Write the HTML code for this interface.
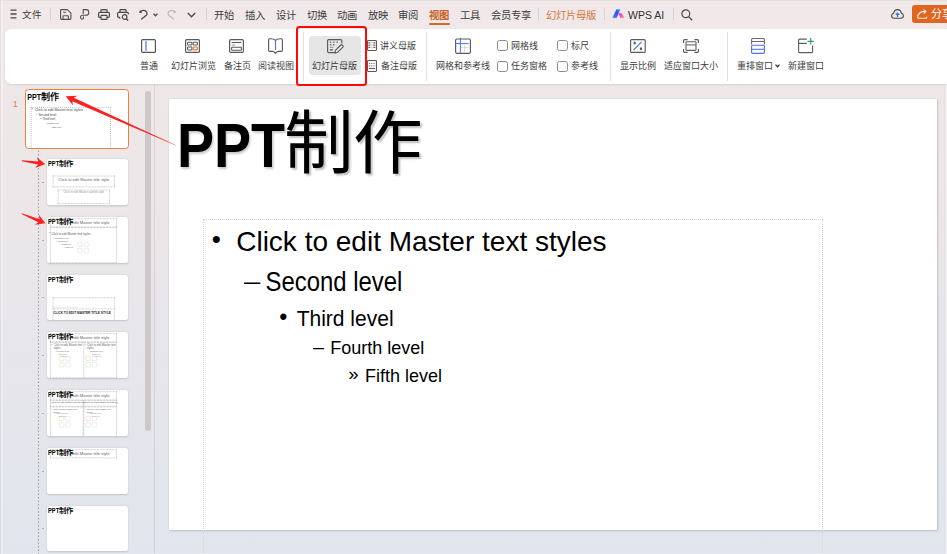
<!DOCTYPE html>
<html lang="zh-CN">
<head>
<meta charset="utf-8">
<style>
*{box-sizing:border-box;margin:0;padding:0}
html,body{width:947px;height:554px;overflow:hidden}
body{position:relative;font-family:"Liberation Sans",sans-serif;color:#333;
 background:linear-gradient(180deg,#f1e9e9 0px,#ede7e8 150px,#e6e6eb 380px,#e1e5ed 554px);}
.a{position:absolute}
.t{position:absolute;white-space:nowrap;line-height:1}
.tab{font-size:10.3px;color:#3c3c3c;top:11px}
.sep{position:absolute;width:1px;background:#d9d2d2}
.lbl{font-size:9px;color:#3c3c3c;top:62px}
svg{position:absolute;overflow:visible}
.thumb{position:absolute;left:46.7px;width:81.1px;height:45.6px;background:#fff;border-radius:2.5px;box-shadow:0 0.5px 2px rgba(0,0,0,.16);overflow:hidden}
.mini{position:absolute;left:0;top:0;width:768.5px;height:432.2px;transform-origin:0 0;transform:scale(.1055)}
</style>
</head>
<body>
<!-- ============ TOP BAR ============ -->
<div class="a" style="left:0;top:0;width:947px;height:1.2px;background:#e6dcdd"></div>
<div class="a" style="left:0;top:0;width:1px;height:554px;background:rgba(120,90,95,.07)"></div><div class="a" style="left:1px;top:0;width:1.5px;height:554px;background:rgba(255,255,255,.3)"></div>
<svg style="left:10px;top:9px" width="8" height="10" viewBox="0 0 8 10"><path d="M0.5 1.2h6M0.5 5h6M0.5 8.8h6" stroke="#4a4a4a" stroke-width="1.3"/></svg>
<div class="t tab" style="left:22px;font-size:9.5px;top:10.4px">文件</div>
<div class="sep" style="left:50px;top:8px;height:12px"></div>
<!-- save -->
<svg style="left:60px;top:9px" width="12" height="11" viewBox="0 0 12 11"><path d="M.6 1.5c0-.5.4-.9.9-.9h5.8l3.6 3.6v5.3c0 .5-.4.9-.9.9H1.5c-.5 0-.9-.4-.9-.9z" fill="none" stroke="#505050" stroke-width="1.1" stroke-linejoin="round"/><path d="M3.3 3.3h2.4" stroke="#505050" stroke-width="1.1"/><path d="M3 10.4V7.4c0-.4.3-.7.7-.7h4c.4 0 .7.3.7.7v3" fill="none" stroke="#505050" stroke-width="1.1"/></svg>
<!-- link -->
<svg style="left:80px;top:9px" width="10" height="11" viewBox="0 0 10 11"><path d="M3.2 5V.6H6c1.6 0 2.8 1.2 2.8 2.8S7.6 6.3 6 6.3H2.6C1.3 6.3.5 7.2.5 8.3s.8 1.9 1.6 1.9c.9 0 1.4-.8 1.4-1.7V7.4" fill="none" stroke="#505050" stroke-width="1.1" stroke-linejoin="round"/></svg>
<!-- print -->
<svg style="left:98px;top:9px" width="12" height="11" viewBox="0 0 12 11"><path d="M3 3.3V1.3c0-.4.3-.7.7-.7h4.6c.4 0 .7.3.7.7v2" fill="none" stroke="#4a4a4a" stroke-width="1.2"/><path d="M2.8 8.3H1.6c-.6 0-1-.4-1-1V4.5c0-.7.5-1.2 1.2-1.2h8.4c.7 0 1.2.5 1.2 1.2v2.8c0 .6-.4 1-1 1H9.2" fill="none" stroke="#4a4a4a" stroke-width="1.2"/><rect x="3" y="6.3" width="6" height="4" rx=".6" fill="none" stroke="#4a4a4a" stroke-width="1.2"/></svg>
<!-- print preview -->
<svg style="left:117px;top:9px" width="13" height="12" viewBox="0 0 13 12"><path d="M3 3.3V1.3c0-.4.3-.7.7-.7h4.6c.4 0 .7.3.7.7v2" fill="none" stroke="#4a4a4a" stroke-width="1.2"/><path d="M2.6 8.3H1.6c-.6 0-1-.4-1-1V4.5c0-.7.5-1.2 1.2-1.2h8.4c.7 0 1.2.5 1.2 1.2v.8" fill="none" stroke="#4a4a4a" stroke-width="1.2"/><path d="M2.2 8.2l1 1.4" stroke="#4a4a4a" stroke-width="1.2"/><circle cx="7.6" cy="8" r="2.3" fill="none" stroke="#4a4a4a" stroke-width="1.2"/><path d="M9.3 9.7l1.8 1.8" stroke="#4a4a4a" stroke-width="1.3"/></svg>
<!-- undo -->
<svg style="left:138px;top:9px" width="10" height="11" viewBox="0 0 10 11"><path d="M2.4 2.9C3.9 1.3 6.4 1 7.9 2.3c1.4 1.2 1.3 3.1.1 4.3L3.6 10" fill="none" stroke="#4a4a4a" stroke-width="1.3" stroke-linecap="round"/><path d="M.9 3.6L2.3.9l1.7 3.3z" fill="#4a4a4a"/></svg>
<svg style="left:152.5px;top:13px" width="5" height="3.5" viewBox="0 0 5 3.5"><path d="M.5.6L2.5 2.7 4.5.6" fill="none" stroke="#4a4a4a" stroke-width="1.3"/></svg>
<!-- redo -->
<svg style="left:167px;top:9px" width="10" height="11" viewBox="0 0 10 11"><path d="M7.6 2.9C6.1 1.3 3.6 1 2.1 2.3.7 3.5.8 5.4 2 6.6L6.4 10" fill="none" stroke="#bcb7b7" stroke-width="1.2" stroke-linecap="round"/><path d="M9.1 3.6L7.7.9 6 4.2z" fill="#bcb7b7"/></svg>
<!-- chevron -->
<svg style="left:187px;top:12px" width="9" height="6" viewBox="0 0 9 6"><path d="M.8 1l3.7 3.8L8.2 1" fill="none" stroke="#4a4a4a" stroke-width="1.3"/></svg>
<div class="sep" style="left:206px;top:8px;height:12px"></div>
<div class="t tab" style="left:214px">开始</div>
<div class="t tab" style="left:245px">插入</div>
<div class="t tab" style="left:276px">设计</div>
<div class="t tab" style="left:307px">切换</div>
<div class="t tab" style="left:337px">动画</div>
<div class="t tab" style="left:368px">放映</div>
<div class="t tab" style="left:398px">审阅</div>
<div class="t tab" style="left:429px;color:#c8622a;font-weight:bold">视图</div>
<div class="a" style="left:429px;top:23px;width:21px;height:2px;background:#d06a30;border-radius:1px"></div>
<div class="t tab" style="left:460px">工具</div>
<div class="t tab" style="left:491px">会员专享</div>
<div class="sep" style="left:538px;top:8px;height:12px"></div>
<div class="t tab" style="left:546px;color:#d4773d">幻灯片母版</div>
<div class="sep" style="left:604px;top:8px;height:12px"></div>
<!-- WPS AI logo -->
<svg style="left:612px;top:9px" width="13" height="10" viewBox="0 0 13 10"><defs><linearGradient id="wg1" x1="0" y1="1" x2="1" y2="0"><stop offset="0" stop-color="#4a7dff"/><stop offset=".6" stop-color="#3050f2"/><stop offset="1" stop-color="#20a8ff"/></linearGradient><linearGradient id="wg2" x1="0" y1="0" x2="1" y2="1"><stop offset="0" stop-color="#f020e8"/><stop offset="1" stop-color="#ff8a8a"/></linearGradient></defs><path d="M.7 8.7h3.8L8.1.6H4.5z" fill="url(#wg1)" stroke="url(#wg1)" stroke-width=".4" stroke-linejoin="round"/><path d="M6.8 4.6h2.7l2.6 4.1H8.4z" fill="url(#wg2)" stroke="url(#wg2)" stroke-width=".4" stroke-linejoin="round"/></svg>
<div class="t tab" style="left:628px;font-size:10.5px;top:10px;color:#333">WPS AI</div>
<div class="sep" style="left:673px;top:8px;height:12px"></div>
<!-- search -->
<svg style="left:681px;top:9px" width="12" height="12" viewBox="0 0 12 12"><circle cx="4.8" cy="4.8" r="3.9" fill="none" stroke="#4a4a4a" stroke-width="1.2"/><path d="M7.6 7.6l3.6 3.6" stroke="#4a4a4a" stroke-width="1.3"/></svg>
<!-- cloud -->
<svg style="left:891px;top:9px" width="13" height="10" viewBox="0 0 13 10"><path d="M3.3 9.3C1.8 9.3.6 8.2.6 6.8c0-1.2.9-2.2 2-2.4C3 2.2 4.6.6 6.5.6s3.5 1.6 3.9 3.8c1.1.2 2 1.2 2 2.4 0 1.4-1.2 2.5-2.7 2.5z" fill="none" stroke="#4a4a4a" stroke-width="1.1"/><path d="M6.5 8.3V4.2M4.8 5.8l1.7-1.7 1.7 1.7" fill="none" stroke="#3b6cf5" stroke-width="1.2"/></svg>
<!-- share button -->
<div class="a" style="left:912px;top:5px;width:40px;height:18px;background:#e0651f;border-radius:3px"></div>
<svg style="left:917px;top:9px" width="11" height="10" viewBox="0 0 11 10"><path d="M.8 5.5v3c0 .4.3.7.7.7h7.5c.4 0 .7-.3.7-.7V7.8" fill="none" stroke="#fff" stroke-width="1.1" opacity=".9"/><path d="M1.5 6.2C2.2 3.8 4.4 2.4 7.6 2.4M6.5.6l2.4 1.8L6.8 4.5" fill="none" stroke="#fff" stroke-width="1.1" opacity=".9"/></svg>
<div class="t" style="left:931px;top:9px;font-size:11px;color:#fff">分享</div>
<!-- ============ RIBBON ============ -->
<div class="a" style="left:5px;top:28.5px;width:950px;height:55.5px;background:#fff;border-radius:6px;box-shadow:0 1px 2px rgba(0,0,0,.10)"></div>
<!-- 普通 -->
<svg style="left:141px;top:39px" width="15" height="14" viewBox="0 0 15 14"><rect x=".6" y=".6" width="13.8" height="12.8" rx="1" fill="none" stroke="#555" stroke-width="1.2"/><path d="M5 2v10" stroke="#4a72f0" stroke-width="1.2"/></svg>
<div class="t lbl" style="left:140px">普通</div>
<!-- 幻灯片浏览 -->
<svg style="left:185px;top:39px" width="15" height="14" viewBox="0 0 15 14"><rect x=".6" y=".6" width="13.8" height="12.8" rx="1" fill="none" stroke="#5a5a5a" stroke-width="1.2"/><rect x="2.6" y="3.2" width="4.3" height="2.8" rx=".7" fill="none" stroke="#5a5a5a" stroke-width="1.05"/><rect x="8.1" y="3.2" width="4.3" height="2.8" rx=".7" fill="none" stroke="#5a5a5a" stroke-width="1.05"/><rect x="2.6" y="8" width="4.3" height="2.9" rx=".7" fill="none" stroke="#5a5a5a" stroke-width="1.05"/><rect x="8.1" y="8" width="4.3" height="2.9" rx=".7" fill="none" stroke="#e0703a" stroke-width="1.1"/></svg>
<div class="t lbl" style="left:171px">幻灯片浏览</div>
<!-- 备注页 -->
<svg style="left:229px;top:39px" width="15" height="14" viewBox="0 0 15 14"><rect x=".6" y=".6" width="13.8" height="12.8" rx="1.2" fill="none" stroke="#5a5a5a" stroke-width="1.2"/><path d="M2.6 3.5h9.6" stroke="#5a5a5a" stroke-width="1.1"/><path d="M2.6 6h3.6" stroke="#a0a0a0" stroke-width="1.1"/><rect x="2.6" y="8.3" width="9.8" height="3" rx=".8" fill="none" stroke="#5a5a5a" stroke-width="1.1"/></svg>
<div class="t lbl" style="left:223.5px">备注页</div>
<!-- 阅读视图 -->
<svg style="left:268px;top:38px" width="15" height="16" viewBox="0 0 15 16"><path d="M7.5 2.3C5.6 .9 3.2 .6 1.7 .8 1 .9.6 1.3.6 2v10.6c0 .5.4.8.9.8h3.8l2.2 1.9 2.2-1.9h3.8c.5 0 .9-.3.9-.8V2c0-.7-.4-1.1-1.1-1.2-1.5-.2-3.9.1-5.8 1.5z" fill="none" stroke="#5a5a5a" stroke-width="1.15" stroke-linejoin="round"/><path d="M7.5 2.8V12" stroke="#4a72f0" stroke-width="1.1"/></svg>
<div class="t lbl" style="left:258px">阅读视图</div>
<!-- separator + red box -->
<div class="sep" style="left:303px;top:32px;height:49px;background:#e3e0e0"></div>
<div class="a" style="left:309px;top:36px;width:51.5px;height:39px;background:#e6e6e6;border-radius:4px"></div>
<svg style="left:327px;top:39px" width="16" height="15" viewBox="0 0 16 15"><path d="M8.6 13.6H1.6c-.55 0-1-.45-1-1V1.6c0-.55.45-1 1-1h12.2c.55 0 1 .45 1 1v2.8" fill="none" stroke="#5a5a5a" stroke-width="1.15"/><path d="M2.9 3.1h1.3M6.2 3.1h1.3M9.5 3.1h1.3M2.9 5.9h1.5M5.9 5.9h1.5M2.8 10.9h3.2" stroke="#5a5a5a" stroke-width="1.1"/><path d="M2.8 8.4h3.4" stroke="#9a9a9a" stroke-width="1.1"/><path d="M7.9 14l.55-2.7 5.3-5.3c.4-.4 1-.4 1.4 0l.75.75c.4.4.4 1 0 1.4l-5.3 5.3z" fill="none" stroke="#5a5a5a" stroke-width="1.1" stroke-linejoin="round"/></svg>
<div class="t lbl" style="left:312px">幻灯片母版</div>
<div class="a" style="left:296px;top:26px;width:71px;height:60px;border:2.6px solid #ff0808;border-radius:3.5px"></div>
<!-- 讲义母版 / 备注母版 -->
<svg style="left:366.8px;top:39.8px" width="10" height="11" viewBox="0 0 10 11"><rect x=".55" y=".55" width="8.9" height="9.9" rx=".6" fill="none" stroke="#5a5a5a" stroke-width="1.1"/><path d="M2.4 2.3v6.6M7.3 2.3v6.6" stroke="#6a6a6a" stroke-width="2" stroke-dasharray="1.3 .9"/><path d="M4.85 2v7" stroke="#bbb" stroke-width="1.2" stroke-dasharray="1.3 .9"/></svg>
<div class="t" style="left:380px;top:42px;font-size:9px;color:#3c3c3c">讲义母版</div>
<svg style="left:366.8px;top:60px" width="10" height="12" viewBox="0 0 10 12"><rect x=".55" y=".55" width="8.9" height="10.9" rx=".6" fill="none" stroke="#5a5a5a" stroke-width="1.1"/><path d="M2 3.4h6M2 5.9h6" stroke="#6a6a6a" stroke-width="1" stroke-dasharray="1.2 1"/><path d="M2 8.5h6" stroke="#5a5a5a" stroke-width="1.1"/></svg>
<div class="t" style="left:380.5px;top:62px;font-size:9px;color:#3c3c3c">备注母版</div>
<div class="sep" style="left:426px;top:32px;height:49px;background:#e3e0e0"></div>
<!-- 网格和参考线 -->
<svg style="left:455px;top:38px" width="16" height="16" viewBox="0 0 16 16"><rect x=".6" y="1" width="14.8" height="14.3" rx="1.2" fill="none" stroke="#5a5a5a" stroke-width="1.15"/><path d="M9.6 7.5v6.5M6.5 9.6h7.5" stroke="#b0b0b0" stroke-width=".9" stroke-dasharray="1 1"/><path d="M5.4 0v15.3M0 5.6h13.8" stroke="#4a72f0" stroke-width="1"/></svg>
<div class="t lbl" style="left:436px">网格和参考线</div>
<div class="a" style="left:497px;top:39.5px;width:11px;height:11px;border:1px solid #8c8c8c;border-radius:2.5px"></div>
<div class="t" style="left:510.5px;top:41.5px;font-size:9px;color:#3c3c3c">网格线</div>
<div class="a" style="left:497px;top:60.5px;width:11px;height:11px;border:1px solid #8c8c8c;border-radius:2.5px"></div>
<div class="t" style="left:511px;top:62px;font-size:9px;color:#3c3c3c">任务窗格</div>
<div class="a" style="left:557px;top:39.5px;width:11px;height:11px;border:1px solid #8c8c8c;border-radius:2.5px"></div>
<div class="t" style="left:570.5px;top:41.5px;font-size:9px;color:#3c3c3c">标尺</div>
<div class="a" style="left:557px;top:60.5px;width:11px;height:11px;border:1px solid #8c8c8c;border-radius:2.5px"></div>
<div class="t" style="left:571px;top:62px;font-size:9px;color:#3c3c3c">参考线</div>
<div class="sep" style="left:610px;top:32px;height:49px;background:#e3e0e0"></div>
<!-- 显示比例 -->
<svg style="left:629.5px;top:39px" width="16" height="14" viewBox="0 0 16 14"><rect x=".6" y=".6" width="14.6" height="12.8" rx="1" fill="none" stroke="#5a5a5a" stroke-width="1.15"/><path d="M3.6 11L11.6 2.8" stroke="#4a72f0" stroke-width="1.1"/><ellipse cx="4.7" cy="4" rx="1.25" ry="1.5" fill="#5f5f5f"/><ellipse cx="11" cy="9.8" rx="1.25" ry="1.5" fill="#5f5f5f"/></svg>
<div class="t lbl" style="left:620px">显示比例</div>
<!-- 适应窗口大小 -->
<svg style="left:683px;top:39px" width="16" height="14" viewBox="0 0 16 14"><path d="M.6 4V1.6c0-.55.45-1 1-1h3M11.4.6h3c.55 0 1 .45 1 1V4M15.4 10v2.4c0 .55-.45 1-1 1h-3M4.6 13.4h-3c-.55 0-1-.45-1-1V10" fill="none" stroke="#5a5a5a" stroke-width="1.15"/><rect x="3" y="2.7" width="10" height="8.7" rx=".8" fill="none" stroke="#5f5f5f" stroke-width="1.1"/><path d="M3 5.9h10" stroke="#6a6a6a" stroke-width="1.1"/></svg>
<div class="t lbl" style="left:664px">适应窗口大小</div>
<div class="sep" style="left:727px;top:32px;height:49px;background:#e3e0e0"></div>
<!-- 重排窗口 -->
<svg style="left:751px;top:38px" width="14" height="16" viewBox="0 0 14 16"><path d="M.6 6.4V1.5C.6 .95 1.05.5 1.6.5h10.8c.55 0 1 .45 1 1v4.9M.6 3.5h12.8" fill="none" stroke="#6a6a6a" stroke-width="1.1"/><rect x=".6" y="7.2" width="12.8" height="8.1" rx="1.1" fill="none" stroke="#4a72f0" stroke-width="1.15"/><path d="M.6 11.3h12.8" stroke="#4a72f0" stroke-width="1.05"/></svg>
<div class="t lbl" style="left:736.5px">重排窗口</div>
<svg style="left:775px;top:64.3px" width="5" height="3.5" viewBox="0 0 5 3.5"><path d="M.5.6L2.5 2.8 4.5.6" fill="none" stroke="#333" stroke-width="1.3"/></svg>
<!-- 新建窗口 -->
<svg style="left:798px;top:38px" width="17" height="16" viewBox="0 0 17 16"><path d="M8.8 1.1H1.6c-.55 0-1 .45-1 1v11.5c0 .55.45 1 1 1h12c.55 0 1-.45 1-1V7.5M.6 5.3h8.2" fill="none" stroke="#5f5f5f" stroke-width="1.15"/><path d="M12.7.1v6.4M9.5 3.3h6.4" stroke="#33a070" stroke-width="1.2"/></svg>
<div class="t lbl" style="left:788px">新建窗口</div>
<!-- ============ END RIBBON -->
<!-- ============ SLIDE ============ -->
<div class="a" style="left:154px;top:84px;width:1px;height:470px;background:rgba(80,70,90,.12)"></div><div class="a" style="left:0;top:552.5px;width:947px;height:1.5px;background:rgba(255,255,255,.25)"></div>
<div class="a" style="left:944px;top:84px;width:3px;height:470px;background:rgba(255,255,255,.3);border-left:1px solid rgba(0,0,0,.06)"></div>
<div class="a" style="left:168.7px;top:98.8px;width:768.5px;height:431.6px;background:#fff;box-shadow:0.5px 1px 2px rgba(0,0,0,.14),0 0 1px rgba(0,0,0,.22)"></div>
<div class="a" style="left:168.7px;top:98.8px;width:770px;height:456px;overflow:hidden">
 <div class="t" style="left:8.5px;top:15.2px;font-family:'Liberation Sans',sans-serif;font-weight:bold;font-size:63.5px;color:#000;transform-origin:0 0;transform:scaleX(.875);text-shadow:1.5px 1.5px 2.5px rgba(0,0,0,.22)">PPT</div>
 <div class="t" style="left:115.5px;top:11px;font-size:69.5px;font-weight:400;color:#000;text-shadow:1.5px 1.5px 2px rgba(0,0,0,.25)">制作</div>
 <div class="a" style="left:34.5px;top:120px;width:620px;height:400px;border:1px dotted #d6d6d6"></div>
 <div class="t" style="left:43px;top:127px;font-size:26px;color:#000">•</div>
 <div class="t" style="left:67.5px;top:129.5px;font-size:28px;color:#000;transform-origin:0 0;transform:scaleY(.98)">Click to edit Master text styles</div>
 <div class="t" style="left:75.5px;top:170.8px;font-size:23px;color:#000;transform-origin:0 0;transform:scaleX(1.27)">–</div>
 <div class="t" style="left:96.8px;top:170px;font-size:23.9px;color:#000;transform-origin:0 0;transform:scaleY(1.12)">Second level</div>
 <div class="t" style="left:110.5px;top:207px;font-size:23px;color:#000">•</div>
 <div class="t" style="left:128px;top:208px;font-size:21px;color:#000;transform-origin:0 0;transform:scaleY(1.08)">Third level</div>
 <div class="t" style="left:144.5px;top:240.5px;font-size:16.5px;color:#000;transform-origin:0 0;transform:scaleX(1.2)">–</div>
 <div class="t" style="left:161.6px;top:239.5px;font-size:18px;color:#000;transform-origin:0 0;transform:scaleY(1.05)">Fourth level</div>
 <div class="t" style="left:179.5px;top:266.5px;font-size:18.5px;color:#000">»</div>
 <div class="t" style="left:196.4px;top:268.3px;font-size:18px;color:#000;transform-origin:0 0;transform:scaleY(1.03)">Fifth level</div>
</div>
<!-- ============ END SLIDE ============ -->
<!-- ============ PANEL ============ -->
<div class="t" style="left:12.8px;top:99px;font-size:9px;color:#c98a62;transform-origin:0 0;transform:scaleY(1.1)">1</div>
<svg style="left:0;top:0" width="60" height="554"><path d="M38.5 150.5V554" stroke="#9c9c9c" stroke-width="1" stroke-dasharray="1.6 1.9"/></svg>
<div class="a" style="left:145px;top:90.5px;width:6px;height:340px;background:#cdc9ca;border-radius:3px"></div>
<div class="a" style="left:25.3px;top:89.1px;width:103.6px;height:59.8px;border:1.8px solid #e9823e;border-radius:3.5px;background:#fff;overflow:hidden">
 <div class="mini" style="top:0.8px;transform:scale(.1296)">
  <div class="t" style="left:8.5px;top:14.5px;font-weight:bold;font-size:64px;color:#000;transform-origin:0 0;transform:scaleX(.862)">PPT</div>
  <div class="t" style="left:115.5px;top:11px;font-size:69.5px;font-weight:700;color:#000">制作</div>
  <div class="a" style="left:34.8px;top:120.5px;width:620px;height:400px;border:8px dotted #a8a8a8"></div>
  <div class="t" style="left:43px;top:127px;font-size:26px;color:#333">•</div>
  <div class="t" style="left:67.5px;top:129.5px;font-size:28px;color:#444">Click to edit Master text styles</div>
  <div class="t" style="left:76px;top:170px;font-size:23px;color:#444">–</div>
  <div class="t" style="left:96.8px;top:170px;font-size:23.9px;color:#444">Second level</div>
  <div class="t" style="left:111px;top:206px;font-size:20.5px;color:#444">•</div>
  <div class="t" style="left:128px;top:208px;font-size:21px;color:#444">Third level</div>
  <div class="t" style="left:145px;top:238px;font-size:16.5px;color:#444">–</div>
  <div class="t" style="left:161.6px;top:239.5px;font-size:18px;color:#444">Fourth level</div>
  <div class="t" style="left:180px;top:266px;font-size:16.5px;color:#444">»</div>
  <div class="t" style="left:196.4px;top:268.3px;font-size:18px;color:#444">Fifth level</div>
 </div>
</div>
<div class="thumb" style="top:159.3px"><div class="mini">
  <div class="a" style="left:54px;top:158px;width:589px;height:110px;border:7px dotted #b0b0b0"></div>
  <div class="t" style="left:54px;width:589px;top:178px;font-size:38px;color:#666;text-align:center">Click to edit Master title style</div>
  <div class="a" style="left:102px;top:291px;width:493px;height:135px;border:7px dotted #b0b0b0"></div>
  <div class="t" style="left:102px;width:493px;top:300px;font-size:27px;color:#999;text-align:center">Click to edit Master subtitle style</div>
  <div class="t" style="left:8.5px;top:14.5px;font-weight:bold;font-size:64px;color:#000;transform-origin:0 0;transform:scaleX(.862)">PPT</div>
  <div class="t" style="left:115.5px;top:11px;font-size:69.5px;font-weight:700;color:#000">制作</div>
 </div></div>
<div class="a" style="left:42px;top:181.8px;width:2px;height:1px;background:#b0b0b0"></div>
<div class="thumb" style="top:217px"><div class="mini">
  <div class="a" style="left:30px;top:12px;width:632px;height:85px;border:7px dotted #b0b0b0"></div>
  <div class="t" style="left:30px;width:632px;top:30px;font-size:39px;color:#666;text-align:center">Click to edit Master title style</div>
  <div class="a" style="left:30px;top:97px;width:632px;height:340px;border:7px dotted #b0b0b0"></div>
  <div class="t" style="left:18px;top:141px;font-size:26px;color:#555;">•</div>
  <div class="t" style="left:42.5px;top:143.5px;font-size:28px;color:#555;">Click to edit Master text styles</div>
  <div class="t" style="left:51px;top:184px;font-size:23px;color:#555;">–</div>
  <div class="t" style="left:71.8px;top:184px;font-size:23.9px;color:#555;">Second level</div>
  <div class="t" style="left:86px;top:220px;font-size:20.5px;color:#555;">•</div>
  <div class="t" style="left:103px;top:222px;font-size:21px;color:#555;">Third level</div>
  <div class="t" style="left:120px;top:252px;font-size:16.5px;color:#555;">–</div>
  <div class="t" style="left:136.6px;top:253.5px;font-size:18px;color:#555;">Fourth level</div>
  <div class="t" style="left:155px;top:280px;font-size:16.5px;color:#555;">»</div>
  <div class="t" style="left:171.4px;top:282.3px;font-size:18px;color:#555;">Fifth level</div>
  <div class="a" style="left:289px;top:235px;width:46px;height:46px;border:4px solid #f2c4a0;border-radius:8px"></div>
  <div class="a" style="left:349px;top:235px;width:46px;height:46px;border:4px solid #c5d3ee;border-radius:50% 50% 8px 8px"></div>
  <div class="a" style="left:289px;top:295px;width:46px;height:46px;border:4px solid #bfe0c8;border-radius:8px"></div>
  <div class="a" style="left:349px;top:295px;width:46px;height:46px;border:4px solid #d8d8d8;border-radius:8px"></div>
  <div class="t" style="left:8.5px;top:14.5px;font-weight:bold;font-size:64px;color:#000;transform-origin:0 0;transform:scaleX(.862)">PPT</div>
  <div class="t" style="left:115.5px;top:11px;font-size:69.5px;font-weight:700;color:#000">制作</div>
 </div></div>
<div class="a" style="left:42px;top:239.5px;width:2px;height:1px;background:#b0b0b0"></div>
<div class="thumb" style="top:274.5px"><div class="mini">
  <div class="a" style="left:54px;top:212px;width:589px;height:300px;border:7px dotted #b0b0b0"></div>
  <div class="a" style="left:54px;top:318px;width:589px;height:0;border-top:7px dotted #b0b0b0"></div>
  <div class="a" style="left:60px;top:302px;width:230px;height:5px;background:#d0d0d0"></div>
  <div class="t" style="left:60px;top:335px;font-size:40px;color:#222;font-weight:bold;transform-origin:0 0;transform:scaleX(.745)">CLICK TO EDIT MASTER TITLE STYLE</div>
  <div class="t" style="left:8.5px;top:14.5px;font-weight:bold;font-size:64px;color:#000;transform-origin:0 0;transform:scaleX(.862)">PPT</div>
  <div class="t" style="left:115.5px;top:11px;font-size:69.5px;font-weight:700;color:#000">制作</div>
 </div></div>
<div class="a" style="left:42px;top:297.0px;width:2px;height:1px;background:#b0b0b0"></div>
<div class="thumb" style="top:332px"><div class="mini">
  <div class="a" style="left:30px;top:12px;width:632px;height:85px;border:7px dotted #b0b0b0"></div>
  <div class="t" style="left:30px;width:632px;top:30px;font-size:39px;color:#666;text-align:center">Click to edit Master title style</div>
  <div class="a" style="left:30px;top:97px;width:632px;height:340px;border:7px dotted #b0b0b0"></div>
  <div class="a" style="left:346px;top:97px;width:0;height:340px;border-left:7px dotted #b0b0b0"></div>
  <div class="t" style="left:40px;top:112px;font-size:26px;color:#666;line-height:1.1">•&nbsp; Click to edit Master text<br>&nbsp;&nbsp;&nbsp;styles</div>
  <div class="t" style="left:70px;top:175px;font-size:22px;color:#666;">– Second level</div>
  <div class="t" style="left:95px;top:205px;font-size:18px;color:#888;">– Third level</div>
  <div class="t" style="left:120px;top:228px;font-size:16px;color:#888;">» Fifth level</div>
  <div class="a" style="left:117px;top:227px;width:46px;height:46px;border:4px solid #f2c4a0;border-radius:8px"></div>
  <div class="a" style="left:177px;top:227px;width:46px;height:46px;border:4px solid #c5d3ee;border-radius:50% 50% 8px 8px"></div>
  <div class="a" style="left:117px;top:287px;width:46px;height:46px;border:4px solid #bfe0c8;border-radius:8px"></div>
  <div class="a" style="left:177px;top:287px;width:46px;height:46px;border:4px solid #d8d8d8;border-radius:8px"></div>
  <div class="t" style="left:356px;top:112px;font-size:26px;color:#666;line-height:1.1">•&nbsp; Click to edit Master text<br>&nbsp;&nbsp;&nbsp;styles</div>
  <div class="t" style="left:386px;top:175px;font-size:22px;color:#666;">– Second level</div>
  <div class="t" style="left:411px;top:205px;font-size:18px;color:#888;">– Third level</div>
  <div class="t" style="left:436px;top:228px;font-size:16px;color:#888;">» Fifth level</div>
  <div class="a" style="left:367px;top:227px;width:46px;height:46px;border:4px solid #f2c4a0;border-radius:8px"></div>
  <div class="a" style="left:427px;top:227px;width:46px;height:46px;border:4px solid #c5d3ee;border-radius:50% 50% 8px 8px"></div>
  <div class="a" style="left:367px;top:287px;width:46px;height:46px;border:4px solid #bfe0c8;border-radius:8px"></div>
  <div class="a" style="left:427px;top:287px;width:46px;height:46px;border:4px solid #d8d8d8;border-radius:8px"></div>
  <div class="t" style="left:8.5px;top:14.5px;font-weight:bold;font-size:64px;color:#000;transform-origin:0 0;transform:scaleX(.862)">PPT</div>
  <div class="t" style="left:115.5px;top:11px;font-size:69.5px;font-weight:700;color:#000">制作</div>
 </div></div>
<div class="a" style="left:42px;top:354.5px;width:2px;height:1px;background:#b0b0b0"></div>
<div class="thumb" style="top:390px"><div class="mini">
  <div class="a" style="left:30px;top:12px;width:632px;height:85px;border:7px dotted #b0b0b0"></div>
  <div class="t" style="left:30px;width:632px;top:30px;font-size:39px;color:#666;text-align:center">Click to edit Master title style</div>
  <div class="a" style="left:30px;top:97px;width:316px;height:60px;border:7px dotted #b0b0b0"></div>
  <div class="a" style="left:346px;top:97px;width:316px;height:60px;border:7px dotted #b0b0b0"></div>
  <div class="t" style="left:40px;top:105px;font-size:24px;color:#444;">Click to edit Master text styles</div>
  <div class="t" style="left:356px;top:105px;font-size:24px;color:#444;">Click to edit Master text styles</div>
  <div class="a" style="left:30px;top:157px;width:316px;height:290px;border:7px dotted #b0b0b0"></div>
  <div class="a" style="left:346px;top:157px;width:316px;height:290px;border:7px dotted #b0b0b0"></div>
  <div class="t" style="left:40px;top:172px;font-size:22px;color:#666;line-height:1.1">•&nbsp; Click to edit Master text<br>&nbsp;&nbsp;&nbsp;styles</div>
  <div class="t" style="left:70px;top:215px;font-size:20px;color:#777;">– Second level</div>
  <div class="t" style="left:95px;top:240px;font-size:16px;color:#888;">– Third level</div>
  <div class="a" style="left:117px;top:247px;width:46px;height:46px;border:4px solid #f2c4a0;border-radius:8px"></div>
  <div class="a" style="left:177px;top:247px;width:46px;height:46px;border:4px solid #c5d3ee;border-radius:50% 50% 8px 8px"></div>
  <div class="a" style="left:117px;top:307px;width:46px;height:46px;border:4px solid #bfe0c8;border-radius:8px"></div>
  <div class="a" style="left:177px;top:307px;width:46px;height:46px;border:4px solid #d8d8d8;border-radius:8px"></div>
  <div class="t" style="left:356px;top:172px;font-size:22px;color:#666;line-height:1.1">•&nbsp; Click to edit Master text<br>&nbsp;&nbsp;&nbsp;styles</div>
  <div class="t" style="left:386px;top:215px;font-size:20px;color:#777;">– Second level</div>
  <div class="t" style="left:411px;top:240px;font-size:16px;color:#888;">– Third level</div>
  <div class="a" style="left:367px;top:247px;width:46px;height:46px;border:4px solid #f2c4a0;border-radius:8px"></div>
  <div class="a" style="left:427px;top:247px;width:46px;height:46px;border:4px solid #c5d3ee;border-radius:50% 50% 8px 8px"></div>
  <div class="a" style="left:367px;top:307px;width:46px;height:46px;border:4px solid #bfe0c8;border-radius:8px"></div>
  <div class="a" style="left:427px;top:307px;width:46px;height:46px;border:4px solid #d8d8d8;border-radius:8px"></div>
  <div class="t" style="left:8.5px;top:14.5px;font-weight:bold;font-size:64px;color:#000;transform-origin:0 0;transform:scaleX(.862)">PPT</div>
  <div class="t" style="left:115.5px;top:11px;font-size:69.5px;font-weight:700;color:#000">制作</div>
 </div></div>
<div class="a" style="left:42px;top:412.5px;width:2px;height:1px;background:#b0b0b0"></div>
<div class="thumb" style="top:448px"><div class="mini">
  <div class="a" style="left:30px;top:12px;width:632px;height:85px;border:7px dotted #b0b0b0"></div>
  <div class="t" style="left:30px;width:632px;top:30px;font-size:39px;color:#666;text-align:center">Click to edit Master title style</div>
  <div class="t" style="left:8.5px;top:14.5px;font-weight:bold;font-size:64px;color:#000;transform-origin:0 0;transform:scaleX(.862)">PPT</div>
  <div class="t" style="left:115.5px;top:11px;font-size:69.5px;font-weight:700;color:#000">制作</div>
 </div></div>
<div class="a" style="left:42px;top:470.5px;width:2px;height:1px;background:#b0b0b0"></div>
<div class="thumb" style="top:505.5px"><div class="mini">
  <div class="t" style="left:8.5px;top:14.5px;font-weight:bold;font-size:64px;color:#000;transform-origin:0 0;transform:scaleX(.862)">PPT</div>
  <div class="t" style="left:115.5px;top:11px;font-size:69.5px;font-weight:700;color:#000">制作</div>
 </div></div>
<div class="a" style="left:42px;top:528.0px;width:2px;height:1px;background:#b0b0b0"></div>
<!-- ============ END PANEL ============ -->
<!-- ============ ARROWS ============ -->
<svg style="left:0;top:0" width="947" height="554" viewBox="0 0 947 554"><g fill="#ff1f1f"><polygon points="175.98,145.22 73.78,97.82 77.45,95.73 65.70,96.30 73.13,105.41 72.23,101.29 175.82,145.58"/><polygon points="21.83,161.20 38.04,164.60 35.23,168.04 45.20,164.00 36.75,157.35 38.49,161.43 21.97,160.20"/><polygon points="21.51,214.06 38.32,222.13 34.75,224.77 45.40,223.30 38.84,214.78 39.53,219.17 21.89,213.14"/></g></svg>
<!-- ============ END ARROWS ============ -->
</body>
</html>
